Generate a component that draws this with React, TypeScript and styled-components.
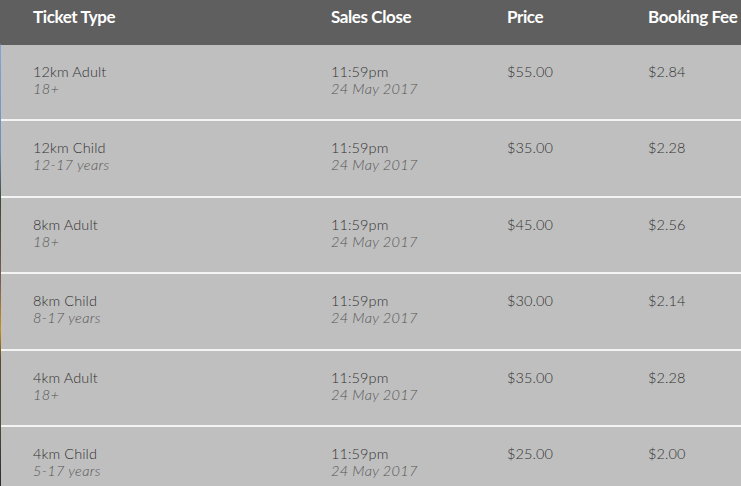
import React from "react";
import styled, { createGlobalStyle } from "styled-components";

const GlobalStyle = createGlobalStyle`
  html, body {
    margin: 0;
    padding: 0;
    background: #2a2a2a;
  }
`;

const Page = styled.div`
  padding-left: 1px;
  min-height: 486px;
  background: linear-gradient(
    to bottom,
    #5f5f5f 0px,
    #5f5f5f 44px,
    #7fa6d6 45px,
    #6f8fb8 150px,
    #3c4a3a 200px,
    #7a5a5a 280px,
    #c8901a 330px,
    #5a4a30 360px,
    #4a5040 420px,
    #2c2c2c 486px
  );
  font-family: Lato, "Open Sans", sans-serif;
`;

const Table = styled.div`
  background: #bfbfbf;
`;

const Row = styled.div<{ $head?: boolean }>`
  display: grid;
  grid-template-columns: 298px 176px 141px 1fr;
  padding-left: 32px;
  box-sizing: border-box;
  height: ${({ $head }) => ($head ? "44.5px" : "76.5px")};
  align-items: ${({ $head }) => ($head ? "center" : "start")};
  padding-top: ${({ $head }) => ($head ? "0" : "18px")};
  background: ${({ $head }) => ($head ? "#5f5f5f" : "#bfbfbf")};
  border-bottom: ${({ $head }) => ($head ? "none" : "2px solid #f4f4f4")};

  &:last-child {
    border-bottom: none;
  }
`;

const HeadCell = styled.div`
  color: #ffffff;
  font-weight: 700;
  font-size: 17px;
  letter-spacing: -0.4px;
  white-space: nowrap;
  margin-top: -11px;
`;

const Cell = styled.div`
  display: flex;
  flex-direction: column;
  white-space: nowrap;
`;

const Main = styled.span`
  color: #333333;
  font-size: 14.5px;
  font-weight: 300;
  line-height: 17px;
  letter-spacing: 0.1px;
`;

const Sub = styled.span`
  color: #555555;
  font-size: 14.5px;
  line-height: 17px;
  font-style: italic;
  font-weight: 300;
  letter-spacing: 0.3px;
`;

type Ticket = {
  name: string;
  age: string;
  price: string;
  fee: string;
};

const tickets: Ticket[] = [
  { name: "12km Adult", age: "18+", price: "$55.00", fee: "$2.84" },
  { name: "12km Child", age: "12-17 years", price: "$35.00", fee: "$2.28" },
  { name: "8km Adult", age: "18+", price: "$45.00", fee: "$2.56" },
  { name: "8km Child", age: "8-17 years", price: "$30.00", fee: "$2.14" },
  { name: "4km Adult", age: "18+", price: "$35.00", fee: "$2.28" },
  { name: "4km Child", age: "5-17 years", price: "$25.00", fee: "$2.00" },
];

const App = () => {
  return (
    <>
      <GlobalStyle />
      <Page>
        <Table>
          <Row $head>
            <HeadCell>Ticket Type</HeadCell>
            <HeadCell>Sales Close</HeadCell>
            <HeadCell>Price</HeadCell>
            <HeadCell>Booking Fee</HeadCell>
          </Row>
          {tickets.map((t, i) => (
            <Row key={i}>
              <Cell>
                <Main>{t.name}</Main>
                <Sub>{t.age}</Sub>
              </Cell>
              <Cell>
                <Main>11:59pm</Main>
                <Sub>24 May 2017</Sub>
              </Cell>
              <Cell>
                <Main>{t.price}</Main>
              </Cell>
              <Cell>
                <Main>{t.fee}</Main>
              </Cell>
            </Row>
          ))}
        </Table>
      </Page>
    </>
  );
};

export default App;
